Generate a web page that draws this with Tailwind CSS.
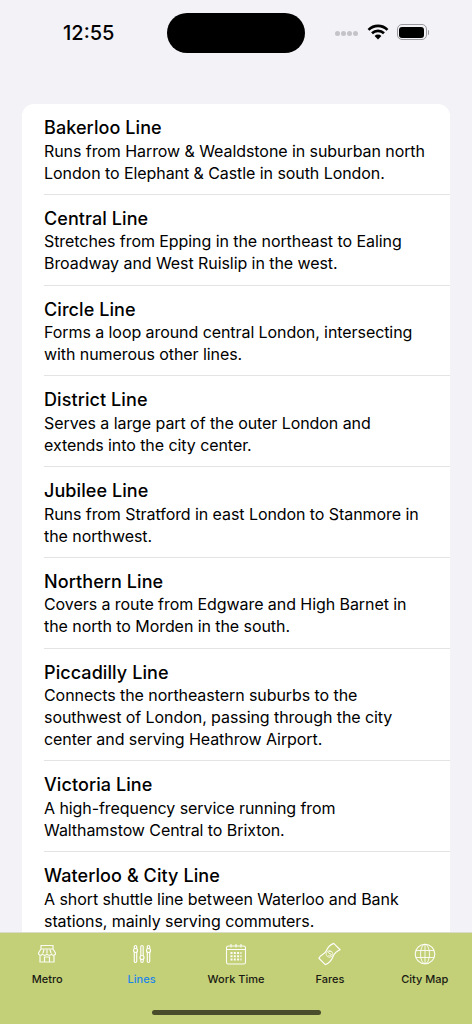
<!DOCTYPE html>
<html lang="en">
<head>
  <meta charset="UTF-8">
  <meta name="viewport" content="width=device-width, initial-scale=1.0">
  <title>Lines</title>
  <script src="https://cdn.jsdelivr.net/npm/@tailwindcss/browser@4"></script>
</head>
<body class="bg-[#f2f2f7] text-black font-['Inter','Liberation_Sans',sans-serif]">
  <div class="relative h-[1024px] w-[472px] overflow-hidden flex flex-col">

    <!-- status bar -->
    <div class="h-[104px] shrink-0 pt-[13px] pl-[63px] pr-[34px] flex items-start">
      <span class="w-[104px] mt-[8px] text-[20px] leading-[24px] font-medium">12:55</span>
      <div class="h-[40px] w-[138px] rounded-full bg-black"></div>
      <div class="ml-[30px] mt-[11px] flex items-center">
        <div class="flex gap-[1.5px] mt-[3px]">
          <span class="size-[4.5px] rounded-full bg-[#c4c4c8]"></span>
          <span class="size-[4.5px] rounded-full bg-[#c4c4c8]"></span>
          <span class="size-[4.5px] rounded-full bg-[#c4c4c8]"></span>
          <span class="size-[4.5px] rounded-full bg-[#c4c4c8]"></span>
        </div>
        <svg class="ml-[9px]" width="22" height="16" viewBox="0 0 22 16" fill="none" stroke="#000" stroke-width="2.6">
          <path d="M1.500 5.800a13.500 13.500 0 0 1 19 0"/>
          <path d="M5 9.300a8.600 8.600 0 0 1 12 0"/>
          <path d="M11 15.500 7.600 12a4.800 4.800 0 0 1 6.800 0z" fill="#000" stroke="none"/>
        </svg>
        <div class="ml-[8px] h-[16px] w-[30px] rounded-[5px] border border-[#9a9a9e] p-[1.5px]">
          <div class="h-full w-full rounded-[3px] bg-black"></div>
        </div>
        <div class="ml-[1px] h-[5px] w-[1.5px] rounded-r bg-[#9a9a9e]"></div>
      </div>
    </div>

    <!-- list -->
    <div class="mx-[22px] flex-1 overflow-hidden rounded-t-[12px] bg-white pl-[22px]">
      <div class="border-b border-[#e3e3e6] pt-[12px] pb-[10.25px] pr-[20px]">
        <h3 class="text-[18px] leading-[23.5px] font-medium tracking-[0.08px]">Bakerloo Line</h3>
        <p class="text-[16px] leading-[22px] tracking-[-0.07px]">Runs from Harrow &amp; Wealdstone in suburban north London to Elephant &amp; Castle in south London.</p>
      </div>
      <div class="border-b border-[#e3e3e6] pt-[12px] pb-[10.25px] pr-[20px]">
        <h3 class="text-[18px] leading-[23.5px] font-medium tracking-[0.08px]">Central Line</h3>
        <p class="text-[16px] leading-[22px] tracking-[-0.07px]">Stretches from Epping in the northeast to Ealing Broadway and West Ruislip in the west.</p>
      </div>
      <div class="border-b border-[#e3e3e6] pt-[12px] pb-[10.25px] pr-[20px]">
        <h3 class="text-[18px] leading-[23.5px] font-medium tracking-[0.08px]">Circle Line</h3>
        <p class="text-[16px] leading-[22px] tracking-[-0.07px]">Forms a loop around central London, intersecting with numerous other lines.</p>
      </div>
      <div class="border-b border-[#e3e3e6] pt-[12px] pb-[10.25px] pr-[20px]">
        <h3 class="text-[18px] leading-[23.5px] font-medium tracking-[0.08px]">District Line</h3>
        <p class="text-[16px] leading-[22px] tracking-[-0.07px]">Serves a large part of the outer London and extends into the city center.</p>
      </div>
      <div class="border-b border-[#e3e3e6] pt-[12px] pb-[10.25px] pr-[20px]">
        <h3 class="text-[18px] leading-[23.5px] font-medium tracking-[0.08px]">Jubilee Line</h3>
        <p class="text-[16px] leading-[22px] tracking-[-0.07px]">Runs from Stratford in east London to Stanmore in the northwest.</p>
      </div>
      <div class="border-b border-[#e3e3e6] pt-[12px] pb-[10.25px] pr-[20px]">
        <h3 class="text-[18px] leading-[23.5px] font-medium tracking-[0.08px]">Northern Line</h3>
        <p class="text-[16px] leading-[22px] tracking-[-0.07px]">Covers a route from Edgware and High Barnet in the north to Morden in the south.</p>
      </div>
      <div class="border-b border-[#e3e3e6] pt-[12px] pb-[10.25px] pr-[20px]">
        <h3 class="text-[18px] leading-[23.5px] font-medium tracking-[0.08px]">Piccadilly Line</h3>
        <p class="text-[16px] leading-[22px] tracking-[-0.07px]">Connects the northeastern suburbs to the southwest of London, passing through the city center and serving Heathrow Airport.</p>
      </div>
      <div class="border-b border-[#e3e3e6] pt-[12px] pb-[10.25px] pr-[20px]">
        <h3 class="text-[18px] leading-[23.5px] font-medium tracking-[0.08px]">Victoria Line</h3>
        <p class="text-[16px] leading-[22px] tracking-[-0.07px]">A high-frequency service running from Walthamstow Central to Brixton.</p>
      </div>
      <div class="pt-[12px] pb-[10.25px] pr-[20px]">
        <h3 class="text-[18px] leading-[23.5px] font-medium tracking-[0.08px]">Waterloo &amp; City Line</h3>
        <p class="text-[16px] leading-[22px] tracking-[-0.07px]">A short shuttle line between Waterloo and Bank stations, mainly serving commuters.</p>
      </div>
    </div>

    <!-- tab bar -->
    <div class="relative h-[92px] shrink-0 bg-[#c3d077] border-t border-[#d9dccb] grid grid-cols-5 pt-[9px]">
      <div class="flex flex-col items-center gap-[6px]">
        <svg width="24" height="24" viewBox="0 0 24 24" fill="none" stroke="#fff" stroke-width="1.200" stroke-opacity=".9">
          <path d="M6 3.500h12v3.500H6zM6 7 3.500 11a2 2 0 0 0 4 .5 2.300 2.300 0 0 0 4.500 0 2.300 2.300 0 0 0 4.500 0 2 2 0 0 0 4-.5L18 7"/>
          <path d="M5 13.500V20h14v-6.500M9.500 20v-5h5v5"/>
          <path d="M9 7.500 8 11M12 7.500V11M15 7.500l1 3.500"/>
        </svg>
        <span class="text-[11px] leading-[14px] font-medium text-[#1a1a14]">Metro</span>
      </div>
      <div class="flex flex-col items-center gap-[6px]">
        <svg width="24" height="24" viewBox="0 0 24 24" fill="none" stroke="#fff" stroke-width="1.200" stroke-opacity=".95">
          <rect x="4.300" y="3.500" width="2.400" height="17" rx="1.200"/>
          <rect x="10.800" y="3.500" width="2.400" height="17" rx="1.200"/>
          <rect x="17.300" y="3.500" width="2.400" height="17" rx="1.200"/>
          <circle cx="5.500" cy="8.500" r="2" fill="#c3d077"/>
          <circle cx="12" cy="15.500" r="2" fill="#c3d077"/>
          <circle cx="18.500" cy="8.500" r="2" fill="#c3d077"/>
        </svg>
        <span class="text-[11px] leading-[14px] font-medium text-[#1c86e8]">Lines</span>
      </div>
      <div class="flex flex-col items-center gap-[6px]">
        <svg width="24" height="24" viewBox="0 0 24 24" fill="none" stroke="#fff" stroke-width="1.100" stroke-opacity=".95">
          <rect x="2.500" y="4" width="19" height="18" rx="1.800"/>
          <path d="M2.500 7.500h19M7 2v3.500M12 2v3.500M17 2v3.500"/>
          <path stroke-width="2" stroke-dasharray="2 1.300" d="M6.500 11h11M6.500 14.300h11M6.500 17.600h11"/>
        </svg>
        <span class="text-[11px] leading-[14px] font-medium text-[#1a1a14]">Work Time</span>
      </div>
      <div class="flex flex-col items-center gap-[6px] -translate-x-[0.5px]">
        <svg width="24" height="24" viewBox="0 0 24 24" fill="none" stroke="#fff" stroke-width="1.200" stroke-opacity=".95">
          <g transform="rotate(-45 12 12)">
            <path d="M1.500 7.500c3.500-1.500 7 1.500 10.500 0s7-1.500 10.500 0v9c-3.500-1.500-7-1.500-10.500 0s-7 1.500-10.500 0z" stroke-linejoin="round"/>
            <circle cx="12" cy="12" r="3.300" stroke-width=".7"/>
          </g>
          <path d="M13.700 9.800c-.9-.8-2.700-.4-2.700.7 0 1.300 2.800.9 2.800 2.300 0 1.200-1.900 1.500-2.900.7" stroke-width=".9"/>
        </svg>
        <span class="text-[11px] leading-[14px] font-medium text-[#1a1a14]">Fares</span>
      </div>
      <div class="flex flex-col items-center gap-[6px]">
        <svg width="24" height="24" viewBox="0 0 24 24" fill="none" stroke="#fff" stroke-width="1.100" stroke-opacity=".95">
          <circle cx="12" cy="12" r="9.800"/>
          <ellipse cx="12" cy="12" rx="4.500" ry="9.800" stroke-width=".9"/>
          <path d="M12 2.200v19.600M3 8.500h18M3 15.500h18" stroke-width=".9"/>
        </svg>
        <span class="text-[11px] leading-[14px] font-medium text-[#1a1a14]">City Map</span>
      </div>
      <div class="absolute bottom-[9px] left-[152px] h-[5px] w-[169px] rounded-full bg-[#4a4d2c]"></div>
    </div>
  </div>
</body>
</html>
